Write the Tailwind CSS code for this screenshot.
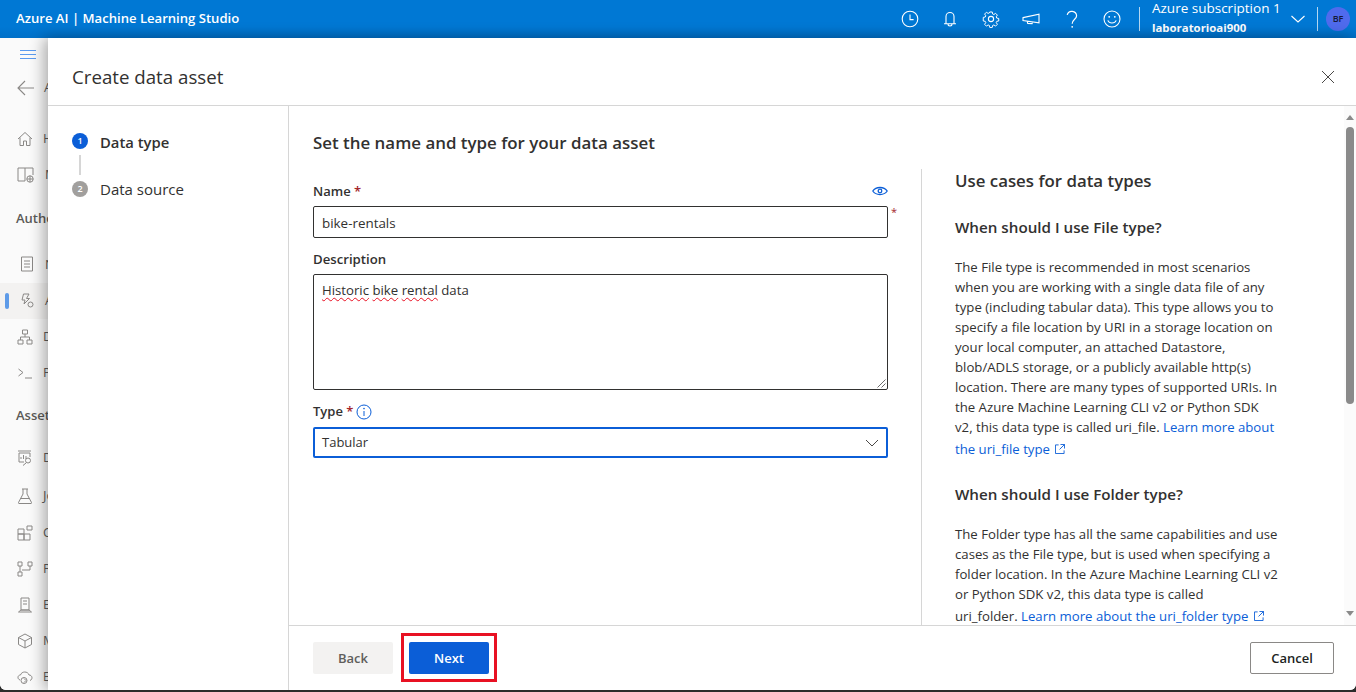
<!DOCTYPE html>
<html lang="en">
<head>
  <meta charset="UTF-8">
  <title>Create data asset</title>
  <script src="https://cdn.jsdelivr.net/npm/@tailwindcss/browser@4"></script>
</head>
<body class="h-screen overflow-hidden bg-[#2b2b2b] font-['Open_Sans',sans-serif] text-[14px] text-[#323130]">
  <div class="h-[690px] flex flex-col overflow-hidden rounded-b-[6px] bg-white">

    <!-- top bar -->
    <header class="h-[38px] shrink-0 flex items-center bg-gradient-to-b from-[#0078d4] from-70% to-[#0070c8] text-white">
      <div class="pl-4 text-[13.1px] font-semibold">Azure AI | Machine Learning Studio</div>
      <div class="ml-auto flex items-center h-full">
        <div class="flex items-center gap-[22.5px] text-white">
          <svg class="w-[18px] h-[18px]" viewBox="0 0 18 18" fill="none" stroke="currentColor" stroke-width="1.1"><circle cx="9" cy="9" r="7.8"/><path d="M9 4.5V9.6H12.6"/></svg>
          <svg class="w-[18px] h-[18px]" viewBox="0 0 18 18" fill="none" stroke="currentColor" stroke-width="1.1"><path d="M5 13.5V6.5a4 4 0 0 1 8 0v7M3 13.8h12M7 14c0 2.6 4 2.6 4 0"/></svg>
          <svg class="w-[18px] h-[18px]" viewBox="0 0 18 18" fill="none" stroke="currentColor" stroke-width="1.1"><circle cx="9" cy="9" r="2.6"/><path d="M7.6 1.2h2.8l.4 2.2 1.4.6 1.9-1.3 2 2-1.3 1.9.6 1.4 2.2.4v2.8l-2.2.4-.6 1.4 1.3 1.9-2 2-1.9-1.3-1.4.6-.4 2.2H7.6l-.4-2.2-1.4-.6-1.9 1.3-2-2 1.3-1.9-.6-1.4-2.2-.4V7.2l2.2-.4.6-1.4-1.3-1.9 2-2 1.9 1.3 1.4-.6z" transform="translate(.9 .9) scale(.9)"/></svg>
          <svg class="w-[18px] h-[18px]" viewBox="0 0 18 18" fill="none" stroke="currentColor" stroke-width="1.1"><path d="M1 7.6 17 4.2v8.6L1 10.6zM5.2 11.2l.5 2.2 4.4.2.4-1.6"/></svg>
          <svg class="w-[18px] h-[18px]" viewBox="0 0 18 18" fill="none" stroke="currentColor" stroke-width="1.2"><path d="M4.2 4.8a4.8 4.8 0 0 1 9.4 1c0 3.400-4.400 3.600-4.400 8"/><circle cx="9.200" cy="16.800" r=".9" fill="currentColor" stroke="none"/></svg>
          <svg class="w-[18px] h-[18px]" viewBox="0 0 18 18" fill="none" stroke="currentColor" stroke-width="1.1"><circle cx="9" cy="9" r="8"/><circle cx="6.2" cy="6.8" r=".9" fill="currentColor" stroke="none"/><circle cx="11.8" cy="6.8" r=".9" fill="currentColor" stroke="none"/><path d="M4.8 10.4c1.4 3.4 7 3.4 8.4 0"/></svg>
        </div>
        <div class="ml-[18px] w-px h-[24px] bg-white/70"></div>
        <div class="ml-[12px] w-[132px] h-full flex flex-col">
          <span class="text-[13.5px] leading-[16px] whitespace-nowrap">Azure subscription 1</span>
          <span class="mt-[2px] text-[11.4px] font-bold leading-[20px] whitespace-nowrap">laboratorioai900</span>
        </div>
        <svg class="ml-[6px] w-[16px] h-[16px]" viewBox="0 0 16 16" fill="none" stroke="currentColor" stroke-width="1.1"><path d="M1.5 5 8 11l6.5-6"/></svg>
        <div class="ml-[11px] w-px h-[24px] bg-white/70"></div>
        <div class="mr-[6px] ml-[8px] w-[24px] h-[24px] rounded-full bg-[#4f6bed] text-[#15193a] text-[9px] font-semibold flex items-center justify-center">BF</div>
      </div>
    </header>

    <div class="relative flex-1 min-h-0">
      <!-- left nav, mostly covered by the panel -->
      <nav class="w-[48px] h-full overflow-hidden whitespace-nowrap bg-[#fafafa] text-[#605e5c] text-[13px]">
        <div class="h-[32px] pl-[20px] flex items-center">
          <svg class="w-[16px] h-[9px] shrink-0" viewBox="0 0 16 9" fill="none" stroke="#5b9bf0" stroke-width="1"><path d="M0 .5h16M0 4.500h16M0 8.500h16"/></svg>
        </div>
        <div class="h-[36px] pl-[17px] flex items-center gap-[9px]">
          <svg class="w-[18px] h-[16px] shrink-0" viewBox="0 0 18 16" fill="none" stroke="#8a8886" stroke-width="1.1"><path d="M8 1 1 8l7 7M1 8h16"/></svg><span>Azure</span>
        </div>
        <div class="mt-[15px] h-[36px] pl-[17px] flex items-center gap-[10px]">
          <svg class="w-[16px] h-[16px] shrink-0" viewBox="0 0 16 16" fill="none" stroke="#8a8886"><path d="M1 8 8 1.500 15 8M3 6.500V14.500H6.500V10H9.500V14.500H13V6.500"/></svg><span>Home</span>
        </div>
        <div class="h-[36px] pl-[17px] flex items-center gap-[10px]">
          <svg class="w-[18px] h-[16px] shrink-0" viewBox="0 0 18 16" fill="none" stroke="#8a8886"><path d="M8 14H1V1h7v13M8 1h8v7"/><circle cx="13" cy="12" r="3.200"/><path d="M9.800 12h6.400M13 8.800v6.400"/></svg><span>Model</span>
        </div>
        <div class="h-[51px] pl-[16px] pt-[16px] font-semibold text-[#5c5a58]">Authoring</div>
        <div class="h-[36px] pl-[17px] flex items-center gap-[10px] mt-[3px]">
          <svg class="w-[16px] h-[16px] shrink-0 -mt-[2px] ml-[2px]" viewBox="0 0 13 16" fill="none" stroke="#8a8886"><path d="M1 1h11v14H1zM3.500 5h6M3.500 8h6M3.500 11h6"/></svg><span>Notebooks</span>
        </div>
        <div class="relative h-[36px] pl-[17px] flex items-center gap-[10px] bg-[#f3f2f1]">
          <span class="absolute left-[5px] top-[10px] w-[4px] h-[16px] rounded-[2px] bg-[#5e9be8]"></span>
          <svg class="w-[16px] h-[16px] shrink-0 ml-[2px]" viewBox="0 0 16 16" fill="none" stroke="#8a8886"><path d="M4.500 1H10L7.500 5.500H10.500L5 11 6 7H3z"/><circle cx="11.500" cy="11.500" r="2.500"/></svg><span>Automated</span>
        </div>
        <div class="h-[36px] pl-[17px] flex items-center gap-[10px]">
          <svg class="w-[16px] h-[16px] shrink-0" viewBox="0 0 16 16" fill="none" stroke="#8a8886"><path d="M5.500 1h5v4h-5zM1 11h5v4H1zM10 11h5v4h-5zM8 5v3M3.500 11V8h9v3"/></svg><span>Designer</span>
        </div>
        <div class="h-[36px] pl-[17px] flex items-center gap-[10px]">
          <svg class="w-[16px] h-[16px] shrink-0" viewBox="0 0 16 16" fill="none" stroke="#8a8886"><path d="M1.500 4 6 7.500 1.500 11M8 13h7"/></svg><span>Prompt</span>
        </div>
        <div class="h-[48px] pl-[16px] pt-[15px] font-semibold text-[#5c5a58]">Assets</div>
        <div class="h-[38px] pl-[17px] flex items-center gap-[10px]">
          <svg class="w-[16px] h-[16px] shrink-0" viewBox="0 0 16 16" fill="none" stroke="#8a8886"><path d="M7 12H2V3h11v4M1 1h13M4 9V7M6.500 9V5M9 9V6"/><circle cx="11" cy="10.500" r="2.500"/><path d="m9 13-3 2.500"/></svg><span>Data</span>
        </div>
        <div class="h-[38px] pl-[17px] flex items-center gap-[10px]">
          <svg class="w-[16px] h-[16px] shrink-0" viewBox="0 0 16 16" fill="none" stroke="#8a8886"><path d="M5 1h6M6 1v5L1.500 14.500c-.3.5 0 1 .5 1h12c.5 0 .8-.5.5-1L10 6V1M3.500 10.500h9"/></svg><span>Jobs</span>
        </div>
        <div class="h-[36px] pl-[17px] flex items-center gap-[10px]">
          <svg class="w-[16px] h-[16px] shrink-0" viewBox="0 0 16 16" fill="none" stroke="#8a8886"><path d="M1 4h6v5H1zM1 9h6v6H1zM7 9h6v6H7zM10 1h5v4h-5z"/></svg><span>Components</span>
        </div>
        <div class="h-[36px] pl-[17px] flex items-center gap-[10px]">
          <svg class="w-[16px] h-[16px] shrink-0" viewBox="0 0 16 16" fill="none" stroke="#8a8886"><path d="M1 1h4v4H1zM11 1h4v4h-4zM1 11h4v4H1zM3 5v6M5 9h8V5"/></svg><span>Pipelines</span>
        </div>
        <div class="h-[36px] pl-[17px] flex items-center gap-[10px]">
          <svg class="w-[16px] h-[16px] shrink-0" viewBox="0 0 16 16" fill="none" stroke="#8a8886"><path d="M4 1h8v12H4zM1.500 15h13l-2.500-2H4zM6 4h4M6 7h4"/></svg><span>Environments</span>
        </div>
        <div class="h-[36px] pl-[17px] flex items-center gap-[10px]">
          <svg class="w-[16px] h-[16px] shrink-0" viewBox="0 0 16 16" fill="none" stroke="#8a8886"><path d="M8 1 14.500 4.500V11.500L8 15 1.500 11.500V4.500zM1.500 4.500 8 8l6.500-3.500M8 8v7"/></svg><span>Models</span>
        </div>
        <div class="h-[31px] pl-[17px] pt-[10px] flex items-start gap-[10px] text-[12px] leading-[16px]">
          <svg class="w-[16px] h-[16px] shrink-0" viewBox="0 0 16 16" fill="none" stroke="#8a8886"><path d="M3 11C0 10 .5 6 3.500 6 4.500 2 11 2 12 6c3.500 0 4 4.500 1 5.500"/><circle cx="7" cy="11.500" r="3"/><path d="M7 9.500 9 11.500 7 13.500"/></svg><span>Endpoints</span>
        </div>
      </nav>

      <!-- create data asset panel, lies over the nav -->
      <section class="absolute inset-y-0 left-[48px] right-0 flex flex-col bg-white shadow-[-4px_0_14px_rgba(0,0,0,0.32)]">
        <div class="h-[68px] shrink-0 flex items-center justify-between border-b border-[#d6d6d6] pl-[24px] pr-[21px] pt-[10px]">
          <h1 class="text-[18.7px] text-[#323130] mt-[2px]">Create data asset</h1>
          <svg class="w-[14px] h-[14px]" viewBox="0 0 14 14" fill="none" stroke="#4b4947" stroke-width="1"><path d="m1 1 12 12M13 1 1 13"/></svg>
        </div>

        <div class="flex-1 min-h-0 flex">
          <!-- steps -->
          <div class="w-[241px] shrink-0 border-r border-[#d6d6d6] pl-[24px] pt-[25px]">
            <div class="flex items-center gap-[12px] h-[20px]">
              <span class="w-[16px] h-[16px] rounded-full bg-[#0b5ed7] text-white text-[9px] font-semibold flex items-center justify-center">1</span>
              <span class="text-[14.8px] font-semibold text-[#323130] pt-[3px]">Data type</span>
            </div>
            <div class="ml-[7px] mt-[4px] w-[2px] h-[20px] bg-[#d6d6d6]"></div>
            <div class="mt-[4px] flex items-center gap-[12px] h-[20px]">
              <span class="w-[16px] h-[16px] rounded-full bg-[#a19f9d] text-white text-[9px] font-semibold flex items-center justify-center">2</span>
              <span class="text-[15px] text-[#323130]">Data source</span>
            </div>
          </div>

          <div class="flex-1 min-w-0 flex flex-col">
            <div class="flex-1 min-h-0 flex overflow-hidden">
              <div class="flex-1 min-w-0 flex overflow-hidden pl-[24px] pt-[25px]">
                <!-- form -->
                <div class="w-[575px] shrink-0">
                  <h2 class="text-[16.9px] font-semibold leading-[24px] text-[#323130] whitespace-nowrap">Set the name and type for your data asset</h2>
                  <div class="mt-[27px] h-[20px] flex items-center justify-between">
                    <label class="text-[13px] font-semibold">Name <span class="text-[#a4262c]">*</span></label>
                    <svg class="w-[16px] h-[10px] -mt-[3px]" viewBox="0 0 16 10" fill="none" stroke="#0b5ed7" stroke-width="1.300"><path d="M.8 5C4 .3 12 .3 15.200 5 12 9.700 4 9.700.8 5z"/><circle cx="8" cy="5" r="1.800"/></svg>
                  </div>
                  <div class="relative mt-[4px]">
                    <input value="bike-rentals" class="block w-full h-[32px] px-[8px] pt-[2px] border border-[#323130] rounded-[2px] text-[13.4px] text-[#323130] outline-none">
                    <span class="absolute -right-[9px] -top-[1px] text-[11px] leading-[14px] text-[#a4262c]">*</span>
                  </div>
                  <label class="block mt-[11px] h-[20px] text-[13.2px] font-semibold leading-[20px]">Description</label>
                  <div class="relative mt-[5px] h-[116px] px-[8px] pt-[6px] border border-[#323130] rounded-[2px] text-[13.2px] leading-[18px]">
                    <span class="underline decoration-wavy decoration-[#e81123] decoration-1 underline-offset-2">Historic</span>
                    <span class="underline decoration-wavy decoration-[#e81123] decoration-1 underline-offset-2">bike</span>
                    <span class="underline decoration-wavy decoration-[#e81123] decoration-1 underline-offset-2">rental</span> data
                    <svg class="absolute right-[1px] bottom-[1px] w-[9px] h-[9px]" viewBox="0 0 9 9" fill="none" stroke="#6b6b6b"><path d="M8.500.5.5 8.500M8.500 4.500l-4 4"/></svg>
                  </div>
                  <div class="mt-[12px] h-[20px] flex items-center gap-[3px]">
                    <label class="text-[13px] font-semibold">Type <span class="text-[#a4262c]">*</span></label>
                    <svg class="w-[16px] h-[16px]" viewBox="0 0 16 16" fill="none" stroke="#0b5ed7"><circle cx="8" cy="8" r="7"/><path d="M8 7v5"/><circle cx="8" cy="4.600" r=".8" fill="#0b5ed7" stroke="none"/></svg>
                  </div>
                  <div class="mt-[5px] h-[31px] px-[7px] border-2 border-[#0b5ed7] rounded-[2px] flex items-center justify-between text-[13px]">
                    <span>Tabular</span>
                    <svg class="w-[14px] h-[14px]" viewBox="0 0 14 14" fill="none" stroke="#4b4947"><path d="M1 4l6 6 6-6"/></svg>
                  </div>
                </div>

                <!-- help text -->
                <aside class="ml-[33px] pl-[33px] h-[520px] mt-[38px] border-l border-[#d6d6d6] flex-1 min-w-0 overflow-hidden whitespace-nowrap text-[13.2px] leading-[20px] text-[#323130]">
                  <h3 class="text-[16.85px] font-semibold leading-[24px]">Use cases for data types</h3>
                  <h4 class="mt-[22px] text-[15.2px] font-semibold leading-[24px]">When should I use File type?</h4>
                  <p class="mt-[18px]">
                    The File type is recommended in most scenarios<br>
                    when you are working with a single data file of any<br>
                    type (including tabular data). This type allows you to<br>
                    specify a file location by URI in a storage location on<br>
                    your local computer, an attached Datastore,<br>
                    blob/ADLS storage, or a publicly available http(s)<br>
                    location. There are many types of supported URIs. In<br>
                    the Azure Machine Learning CLI v2 or Python SDK<br>
                    v2, this data type is called uri_file. <a class="text-[#0b5ed7]">Learn more about</a>
                  </p>
                  <p class="mt-[2px]"><a class="text-[#0b5ed7]">the uri_file type <svg class="inline w-[10px] h-[10px] ml-[2px] -mt-[2px]" viewBox="0 0 11 11" fill="none" stroke="#0b5ed7"><path d="M4 1H.5v9.500H10V7M6 .5h4.500V5M10.500.5 5 6"/></svg></a></p>
                  <h4 class="mt-[23px] text-[15.2px] font-semibold leading-[24px]">When should I use Folder type?</h4>
                  <p class="mt-[18px]">
                    The Folder type has all the same capabilities and use<br>
                    cases as the File type, but is used when specifying a<br>
                    folder location. In the Azure Machine Learning CLI v2<br>
                    or Python SDK v2, this data type is called
                  </p>
                  <p class="mt-[2px]">uri_folder. <a class="text-[#0b5ed7]">Learn more about the uri_folder type <svg class="inline w-[10px] h-[10px] ml-[2px] -mt-[2px]" viewBox="0 0 11 11" fill="none" stroke="#0b5ed7"><path d="M4 1H.5v9.500H10V7M6 .5h4.500V5M10.500.5 5 6"/></svg></a></p>
                </aside>
              </div>

              <!-- scrollbar -->
              <div class="w-[12px] shrink-0 bg-[#fbfbfb] flex flex-col items-center justify-between pt-[9px] pb-[9px]">
                <span class="w-0 h-0 border-x-[4px] border-x-transparent border-b-[5px] border-b-[#8a8a8a]"></span>
                <span class="w-[8px] h-[277px] mb-auto mt-[7px] rounded-full bg-[#8a8a8a]"></span>
                <span class="w-0 h-0 border-x-[4px] border-x-transparent border-t-[5px] border-t-[#8a8a8a]"></span>
              </div>
            </div>

            <!-- footer -->
            <div class="h-[65px] shrink-0 border-t border-[#d6d6d6] pl-[24px] pr-[22px] pt-[16px] flex items-start justify-between">
              <div class="flex items-start gap-[8px]">
                <button class="w-[80px] h-[32px] rounded-[2px] bg-[#f3f2f1] text-[13px] font-semibold text-[#605e5c] pt-[1px]">Back</button>
                <span class="-mt-[9px] px-[5px] pt-[6px] pb-[5px] border-[3px] border-[#e81123]">
                  <button class="block w-[80px] h-[32px] rounded-[2px] bg-[#0b5ed7] text-[13px] font-semibold text-white pt-[1px]">Next</button>
                </span>
              </div>
              <button class="w-[84px] h-[32px] rounded-[2px] border border-[#8a8886] text-[13px] font-semibold text-[#201f1e] pt-[1px]">Cancel</button>
            </div>
          </div>
        </div>
      </section>
    </div>
  </div>
</body>
</html>
